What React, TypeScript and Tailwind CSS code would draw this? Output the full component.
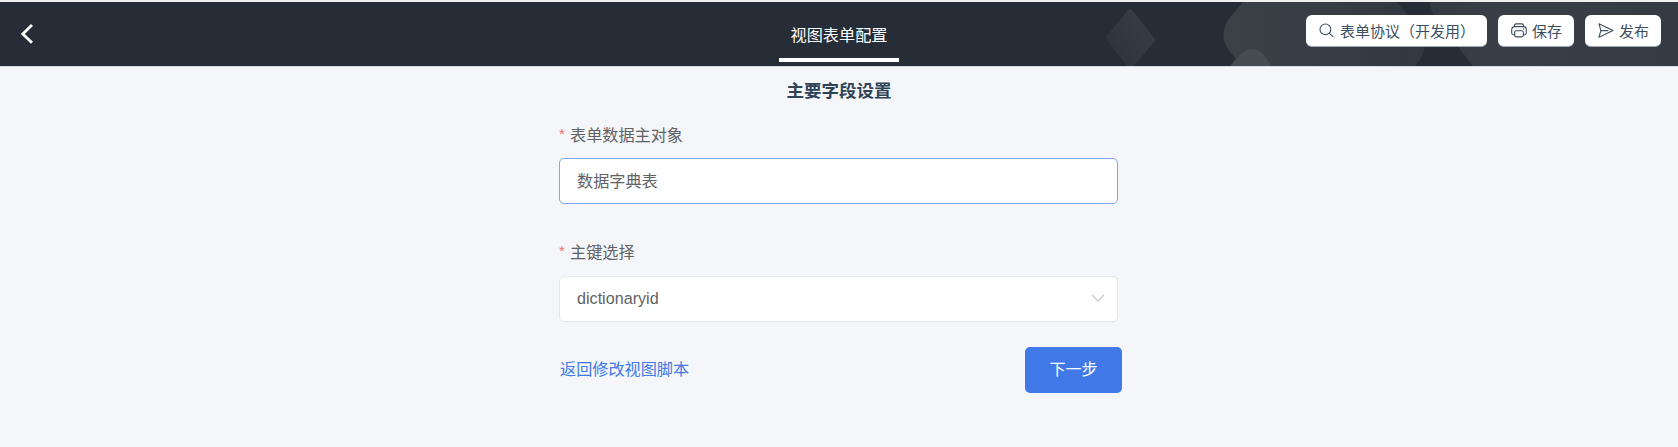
import type { ReactNode } from 'react';

function HeaderPattern() {
  return (
    <svg className="absolute right-0 top-0 h-16 w-[598px]" viewBox="1080 2 598 64" fill="none" aria-hidden="true">
      <defs>
        <linearGradient id="diamond" x1="1110" y1="50" x2="1150" y2="20" gradientUnits="userSpaceOnUse">
          <stop stopColor="#2f353d" />
          <stop offset="1" stopColor="#383d45" />
        </linearGradient>
        <linearGradient id="shade" x1="1223" y1="0" x2="1678" y2="0" gradientUnits="userSpaceOnUse">
          <stop stopColor="#3c4047" />
          <stop offset=".25" stopColor="#383d45" />
          <stop offset=".4" stopColor="#333840" />
          <stop offset=".6" stopColor="#3a3f47" />
          <stop offset="1" stopColor="#343b43" />
        </linearGradient>
      </defs>
      <path d="M1128 10Q1130 8 1132 10L1154 38Q1156 40 1154 42L1134 66H1127L1107 40Q1105 38 1107 36Z" fill="url(#diamond)" />
      <path d="M1243 2L1228 20Q1219 36 1228 49L1241 66H1415Q1428 52 1423 36Q1419 28 1397 2Z" fill="url(#shade)" />
      <path d="M1230 66L1241 54Q1252 44 1263 54L1272 66Z" fill="#474b52" />
      <path d="M1430 2H1678V66H1473L1436 19Q1431 12 1430 2Z" fill="url(#shade)" />
    </svg>
  );
}

function SearchIcon() {
  return (
    <svg className="size-4 shrink-0" viewBox="0 0 16 16" fill="none" stroke="currentColor" strokeWidth="1.1" strokeLinecap="round">
      <circle cx="6.4" cy="6.4" r="5.4" />
      <path d="M10.4 10.4L14 13.6" />
    </svg>
  );
}

function PrinterIcon() {
  return (
    <svg className="size-4 shrink-0" viewBox="0 0 16 16" fill="none" stroke="currentColor" strokeWidth="1.1" strokeLinejoin="round">
      <path d="M3.4 3.6Q3.5 .9 5 .9H11Q12.5 .9 12.6 3.6M3.6 11.8H2.6Q.7 11.8 .7 9.9V6.6Q.7 3.6 3.6 3.6H12.4Q15.3 3.6 15.3 6.6V9.9Q15.3 11.8 13.4 11.8H12.4" />
      <rect x="3.6" y="7.7" width="8.8" height="6.2" rx="1.8" />
      <path d="M11.8 5.9H13.2" />
    </svg>
  );
}

function SendIcon() {
  return (
    <svg className="size-4 shrink-0" viewBox="0 0 16 16" fill="none" stroke="currentColor" strokeWidth="1.1" strokeLinejoin="round">
      <path d="M1 .8L15 7.6L1 14.2L2.9 7.6ZM2.9 7.6H10.4" />
    </svg>
  );
}

function HeaderButton({ icon, label, width }: { icon: ReactNode; label: string; width: string }) {
  return (
    <button
      type="button"
      className={`flex h-8 items-center gap-1 whitespace-nowrap rounded-[6px] border-b border-[#a3a6aa] bg-white pl-[13px] text-[15px] text-[#3d4f5f] ${width}`}
    >
      <span>{icon}</span>
      <span className="ml-px pt-[3px]">{label}</span>
    </button>
  );
}

function RequiredLabel({ text }: { text: string }) {
  return (
    <div className="flex h-6 items-start text-[16.15px] leading-6 text-[#606266]">
      <span className="mr-[4px] w-[7px] text-[15px] leading-[22px] text-[#f56c6c]">*</span>
      <span>{text}</span>
    </div>
  );
}

export default function App() {
  return (
    <div className="h-[447px] overflow-hidden border-t-2 border-[#eef0f2] bg-[#f4f6fa] font-['Liberation_Sans','Noto_Sans_CJK_SC',sans-serif]">
      <header className="relative flex h-16 items-start justify-between bg-[#262d37] shadow-[0_1px_0_#d9dce0]">
        <HeaderPattern />
        <div className="flex h-16 w-[779px] items-center pl-5">
          <svg className="size-6" viewBox="20 22 24 24" fill="none" stroke="#fff" strokeWidth="2.8">
            <path d="M32 25L22.8 34L32 42.8" />
          </svg>
        </div>
        <nav className="relative flex h-[60px] w-[120px] flex-col items-center justify-end text-[16.15px] text-white">
          <span className="mb-[11px] leading-6">视图表单配置</span>
          <span className="h-1 w-full bg-white" />
        </nav>
        <div className="relative flex w-[779px] justify-end gap-[11px] pr-[17px] pt-[13px]">
          <HeaderButton icon={<SearchIcon />} label="表单协议（开发用）" width="w-[181px]" />
          <HeaderButton icon={<PrinterIcon />} label="保存" width="w-[76px]" />
          <HeaderButton icon={<SendIcon />} label="发布" width="w-[76px]" />
        </div>
      </header>

      <main className="ml-[559px] w-[559px]">
        <h1 className="-mr-px pt-[13px] text-center text-[17.5px] font-bold leading-6 text-[#2f4256]">主要字段设置</h1>
        <div className="pt-5">
          <RequiredLabel text="表单数据主对象" />
        </div>
        <input
          className="mt-[11px] block h-[46px] w-full rounded-[5px] border border-[#7fa4f2] bg-white px-[17px] pb-[3px] text-[16.15px] text-[#606266] outline-none"
          defaultValue="数据字典表"
        />
        <div className="pt-9">
          <RequiredLabel text="主键选择" />
        </div>
        <div className="mt-[12px] flex h-[46px] items-center justify-between rounded-[5px] border border-[#e4e7ed] bg-white pb-[2px] pl-[17px] pr-[12px] text-[16.15px] text-[#606266]">
          <span>dictionaryid</span>
          <svg className="h-2 w-[14px]" viewBox="0 0 14 8" fill="none" stroke="#c0c4cc" strokeWidth="1.2">
            <path d="M1 1L7 7L13 1" />
          </svg>
        </div>
        <div className="-mr-[4px] mt-[25px] flex items-center justify-between pl-px">
          <a className="pb-[2px] text-[16.15px] text-[#4179e8]">返回修改视图脚本</a>
          <button type="button" className="h-[46px] w-[97px] rounded-[5px] bg-[#4179e8] text-[16px] text-white">下一步</button>
        </div>
      </main>
    </div>
  );
}
